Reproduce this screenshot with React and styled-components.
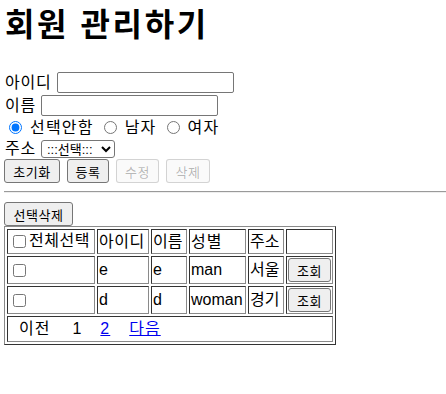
import React from 'react'
import styled, { createGlobalStyle } from 'styled-components'

const GlobalStyle = createGlobalStyle`
  * { box-sizing: border-box; }
  body {
    margin: 0;
    background: #fff;
    color: #000;
    font-family: "Liberation Sans", "Noto Sans CJK KR", sans-serif;
    font-size: 16px;
  }
`

const Page = styled.div`
  padding: 0 0 0 4px;
`

const Title = styled.h1`
  margin: 5px 0 26px 1px;
  font-size: 32px;
  line-height: 40px;
  font-weight: 700;
  letter-spacing: 2.6px;
`

const Row = styled.div`
  display: flex;
  align-items: center;
  height: ${({ $h }) => $h}px;
`

const Label = styled.span`
  display: inline-block;
  width: ${({ $w }) => $w}px;
  padding-left: 1px;
  line-height: 20px;
  letter-spacing: 0.8px;
  white-space: nowrap;
`

const TextInput = styled.input`
  width: 177px;
  height: 21px;
  padding: 1px 2px;
  border: 1px solid #767676;
  border-radius: 2px;
  font-size: 13px;
  margin: 0;
`

const Radio = styled.input`
  width: 13px;
  height: 13px;
  margin: 0 3px 0 5px;
`

const RadioText = styled.span`
  margin: 0 5px 0 5px;
  line-height: 20px;
  letter-spacing: 1.2px;
`

const Select = styled.select`
  width: 74px;
  height: 18px;
  margin: 0;
  padding: 0 0 0 1px;
  border: 1px solid #767676;
  border-radius: 3px;
  font-family: "Liberation Sans", "Noto Sans CJK KR", sans-serif;
  font-size: 13px;
  color: #000;
  background: #fff;
`

const ButtonBar = styled.div`
  display: flex;
  gap: 7px;
  height: 25px;
`

const Button = styled.button`
  width: ${({ $w }) => $w}px;
  height: 24px;
  margin: 0;
  padding: 0;
  border: 1px solid #767676;
  border-radius: 3px;
  background: #efefef;
  color: #000;
  font-family: "Liberation Sans", "Noto Sans CJK KR", sans-serif;
  font-size: 13px;
  letter-spacing: 0.5px;
  &:disabled {
    border-color: rgba(118, 118, 118, 0.3);
    background: rgba(239, 239, 239, 0.3);
    color: rgba(16, 16, 16, 0.3);
  }
`

const Rule = styled.hr`
  margin: 7px 0 9px 0;
  height: 0;
  border: 0;
  border-top: 1px solid #9a9a9a;
  border-bottom: 1px solid #eeeeee;
`

const Table = styled.table`
  width: 332px;
  border-collapse: separate;
  border-spacing: 2px;
  border: 1px solid;
  border-color: #8a8a8a #333 #333 #8a8a8a;
  table-layout: fixed;
`

const Cell = styled.td`
  width: ${({ $w }) => ($w ? `${$w}px` : 'auto')};
  height: ${({ $h }) => $h}px;
  padding: 0 1px;
  border: 1px solid;
  border-color: #333 #8a8a8a #8a8a8a #333;
  vertical-align: middle;
  white-space: nowrap;
  overflow: hidden;
  line-height: 18px;
  letter-spacing: ${({ $ls }) => $ls || 0}px;
`

const Check = styled.input`
  width: 13px;
  height: 13px;
  margin: 3px 3px 3px 4px;
  vertical-align: -2px;
`

const SmallButton = styled(Button)`
  width: 43px;
  height: 24px;
  display: block;
`

const Pager = styled.div`
  display: flex;
  align-items: center;
  padding-left: 10px;
`

const PageItem = styled.span`
  margin-right: ${({ $gap }) => $gap}px;
  letter-spacing: 1px;
`

const PageLink = styled.a`
  color: #0000ee;
  text-decoration: underline;
  margin-right: ${({ $gap }) => $gap}px;
  letter-spacing: 1px;
  cursor: pointer;
`

const members = [
  { id: 'e', name: 'e', gender: 'man', addr: '서울' },
  { id: 'd', name: 'd', gender: 'woman', addr: '경기' },
]

export default function App() {
  return (
    <Page>
      <GlobalStyle />
      <Title>회원 관리하기</Title>

      <Row $h={23}>
        <Label $w={53}>아이디</Label>
        <TextInput type="text" />
      </Row>
      <Row $h={23}>
        <Label $w={37}>이름</Label>
        <TextInput type="text" />
      </Row>
      <Row $h={21}>
        <Radio type="radio" name="gender" defaultChecked />
        <RadioText>선택안함</RadioText>
        <Radio type="radio" name="gender" />
        <RadioText>남자</RadioText>
        <Radio type="radio" name="gender" />
        <RadioText>여자</RadioText>
      </Row>
      <Row $h={21}>
        <Label $w={37}>주소</Label>
        <Select defaultValue="">
          <option value="">:::선택:::</option>
          <option value="서울">서울</option>
          <option value="경기">경기</option>
        </Select>
      </Row>
      <ButtonBar>
        <Button $w={56}>초기화</Button>
        <Button $w={42}>등록</Button>
        <Button $w={43} disabled>수정</Button>
        <Button $w={44} disabled>삭제</Button>
      </ButtonBar>

      <Rule />

      <Button $w={69}>선택삭제</Button>

      <Table>
        <tbody>
          <tr>
            <Cell $w={88} $h={25} $ls={0.5}>
              <Check type="checkbox" />전체선택
            </Cell>
            <Cell $w={52} $h={25} $ls={0.5}>아이디</Cell>
            <Cell $w={36} $h={25}>이름</Cell>
            <Cell $w={57} $h={25} $ls={1}>성별</Cell>
            <Cell $w={36} $h={25}>주소</Cell>
            <Cell $w={47} $h={25}></Cell>
          </tr>
          {members.map((m) => (
            <tr key={m.id}>
              <Cell $h={28}>
                <Check type="checkbox" />
              </Cell>
              <Cell $h={28}>{m.id}</Cell>
              <Cell $h={28}>{m.name}</Cell>
              <Cell $h={28}>{m.gender}</Cell>
              <Cell $h={28}>{m.addr}</Cell>
              <Cell $h={28}>
                <SmallButton>조회</SmallButton>
              </Cell>
            </tr>
          ))}
          <tr>
            <Cell $h={26} colSpan={6}>
              <Pager>
                <PageItem $gap={22}>이전</PageItem>
                <PageItem $gap={18}>1</PageItem>
                <PageLink $gap={19}>2</PageLink>
                <PageLink $gap={0}>다음</PageLink>
              </Pager>
            </Cell>
          </tr>
        </tbody>
      </Table>
    </Page>
  )
}
